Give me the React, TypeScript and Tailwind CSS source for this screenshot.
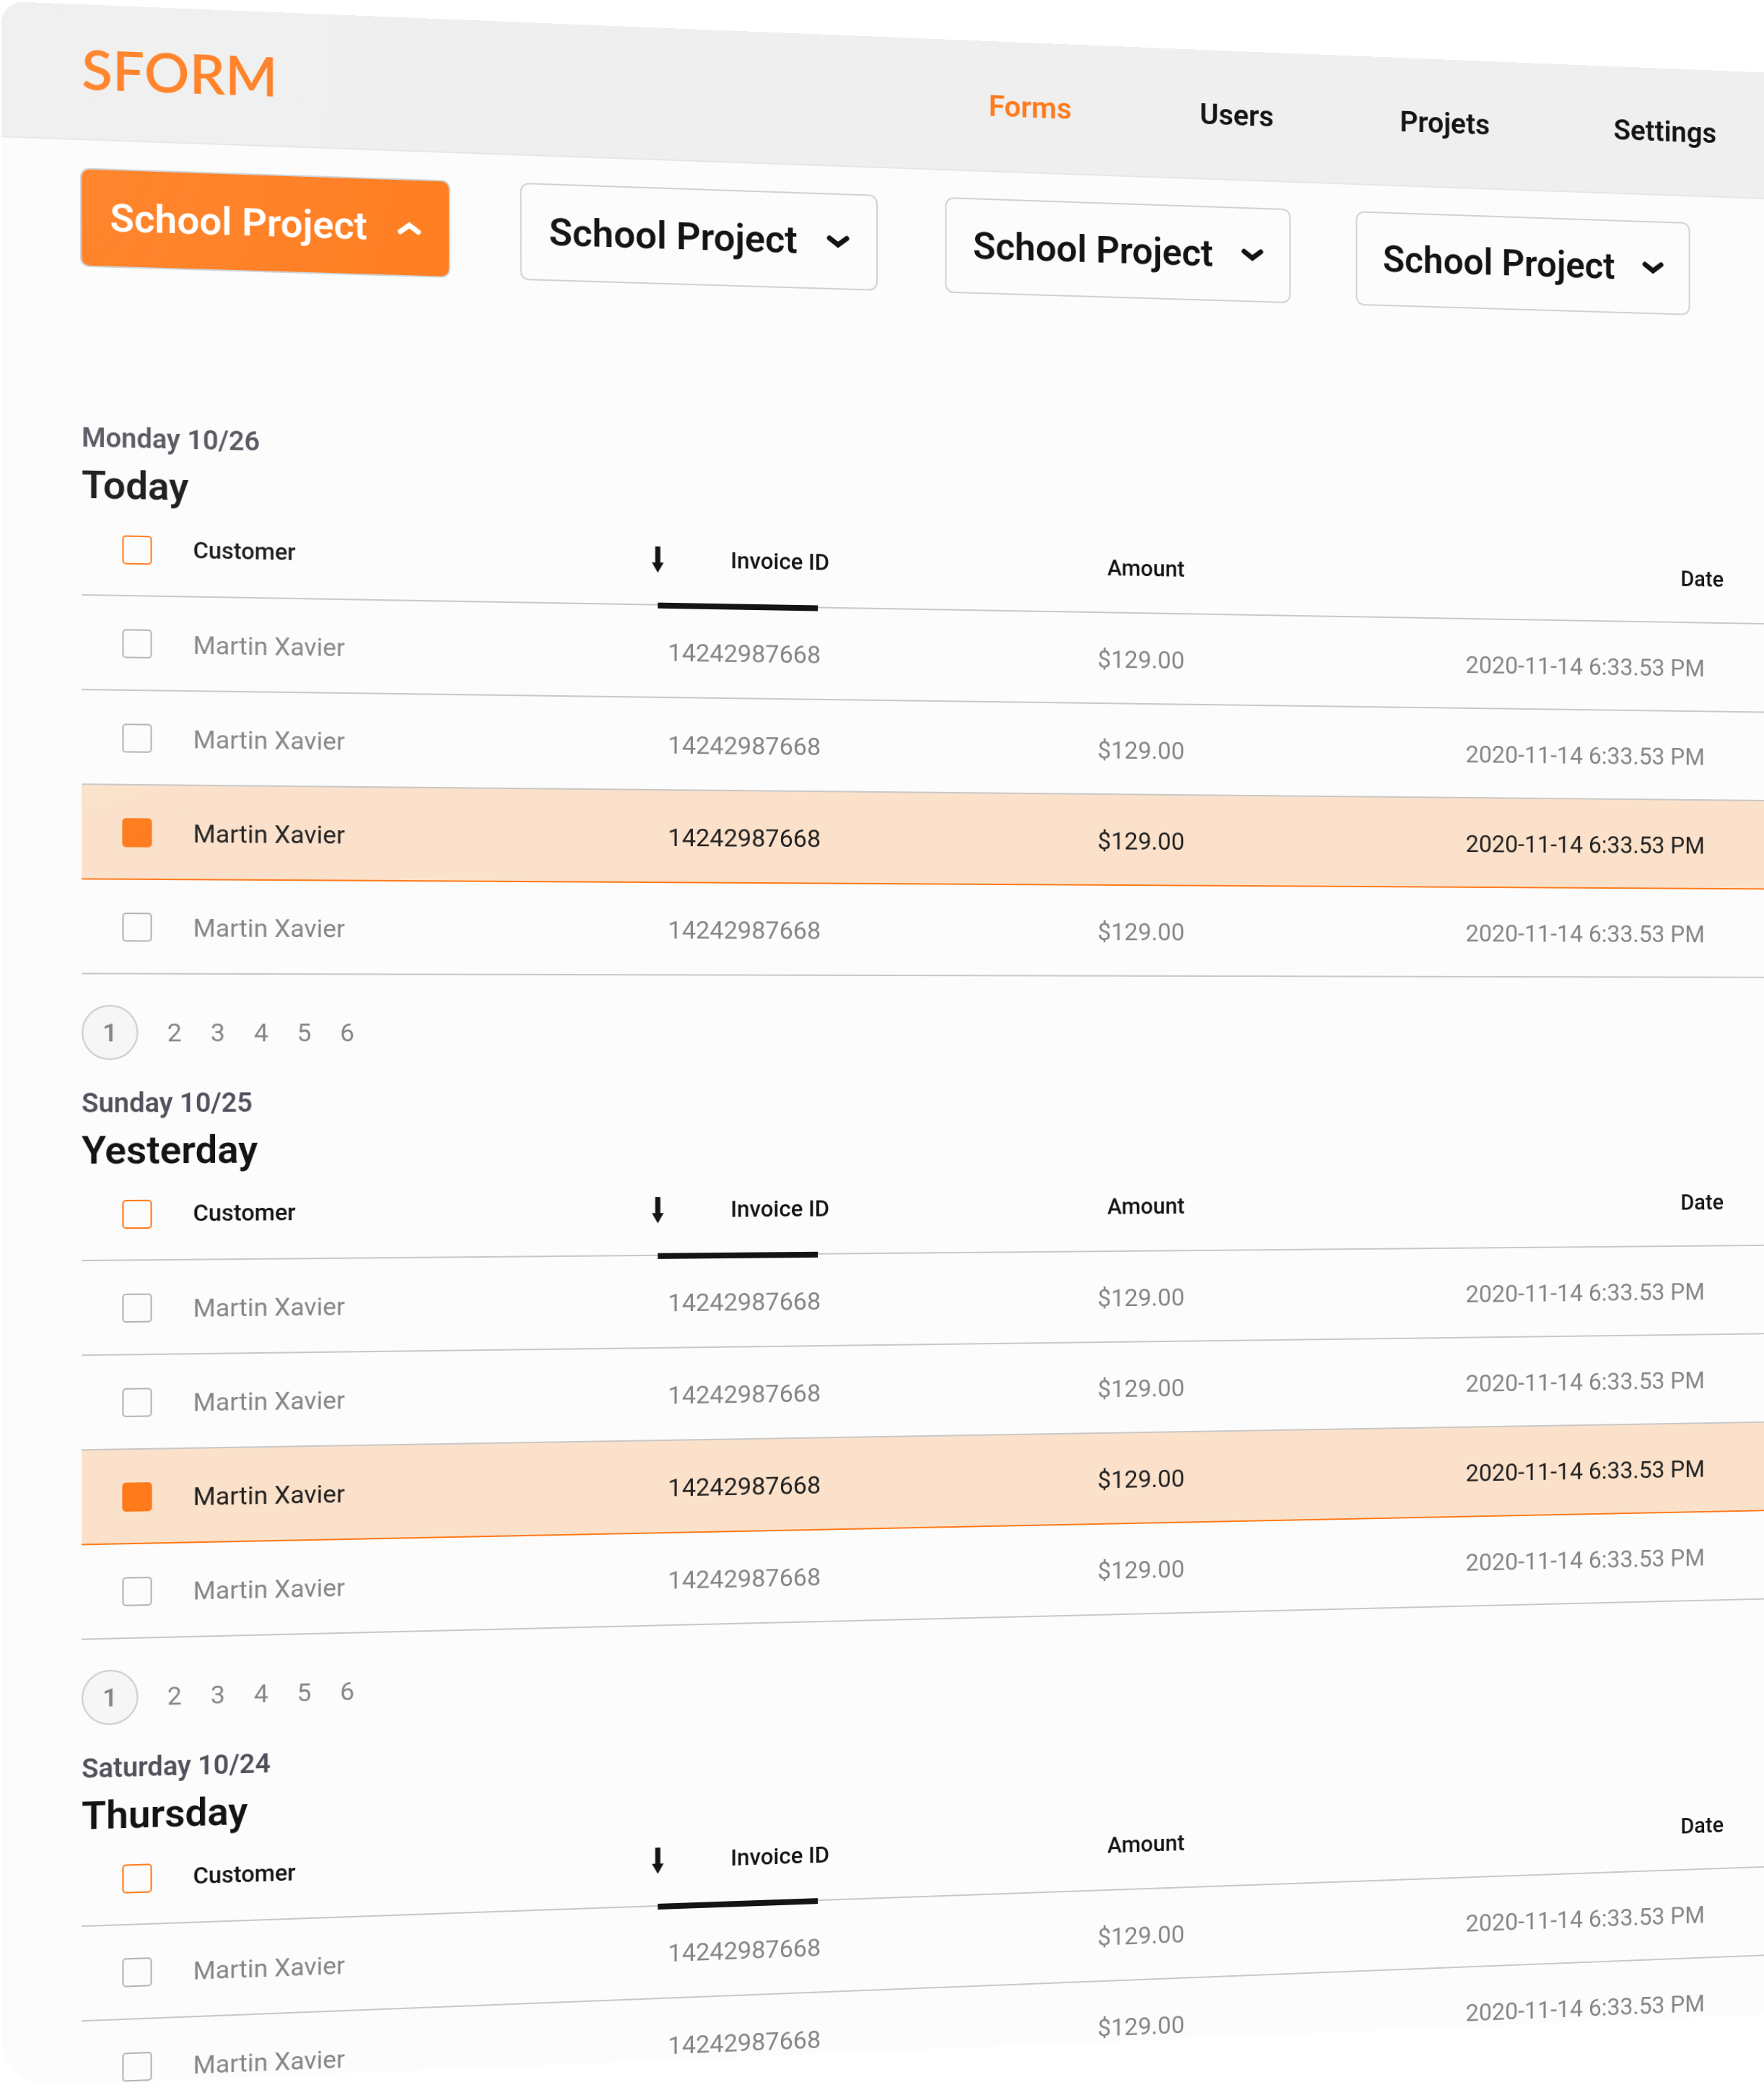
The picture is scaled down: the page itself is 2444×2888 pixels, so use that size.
import React from "react";

const NAV = ["Forms", "Users", "Projets", "Settings"];

const FILTERS = [
  { id: "filter-1", label: "School Project", open: true },
  { id: "filter-2", label: "School Project", open: false },
  { id: "filter-3", label: "School Project", open: false },
  { id: "filter-4", label: "School Project", open: false },
];

const DAYS = [
  { date: "Monday 10/26", title: "Today", rows: 4 },
  { date: "Sunday 10/25", title: "Yesterday", rows: 4 },
  { date: "Saturday 10/24", title: "Thursday", rows: 2 },
];

const ROWS = [
  { customer: "Martin Xavier", invoice: "14242987668", amount: "$129.00", date: "2020-11-14 6:33.53 PM", selected: false },
  { customer: "Martin Xavier", invoice: "14242987668", amount: "$129.00", date: "2020-11-14 6:33.53 PM", selected: false },
  { customer: "Martin Xavier", invoice: "14242987668", amount: "$129.00", date: "2020-11-14 6:33.53 PM", selected: true },
  { customer: "Martin Xavier", invoice: "14242987668", amount: "$129.00", date: "2020-11-14 6:33.53 PM", selected: false },
];

const PAGES = [2, 3, 4, 5, 6];

function Chevron({ open }: { open: boolean }) {
  return (
    <svg viewBox="0 0 32 18" className="h-[18px] w-8" fill="none" aria-hidden="true">
      <path
        d={open ? "M4 14 L16 5 L28 14" : "M4 4 L16 13 L28 4"}
        stroke="currentColor"
        strokeWidth="7"
        strokeLinecap="round"
        strokeLinejoin="miter"
      />
    </svg>
  );
}

function SortArrow() {
  return (
    <svg viewBox="0 0 16 36" className="h-9 w-4" fill="currentColor" aria-hidden="true">
      <path d="M4.500 0 H11.500 V22 H16 L8 36 L0 22 H4.500 Z" />
    </svg>
  );
}

function TopBar() {
  return (
    <header className="flex h-[182px] items-center border-b-2 border-[#e6e6e6] bg-[#efefef] pl-[104px]">
      <a href="#home" className="w-[1227px] pb-2 font-['Lato'] text-[74px] leading-none font-semibold text-[#ff7a1a]">
        SFORM
      </a>
      <nav aria-label="Main" className="flex gap-[182px] text-[41px] leading-[48px] font-semibold">
        {NAV.map((item, i) => (
          <a key={item} href={`#${item.toLowerCase()}`} className={i === 0 ? "text-[#ff7a1a]" : "text-[#141414]"}>
            {item}
          </a>
        ))}
      </nav>
    </header>
  );
}

function Filters() {
  return (
    <div className="-ml-0.5 flex gap-[94px]">
      {FILTERS.map((f) => (
        <button
          key={f.id}
          type="button"
          aria-expanded={f.open}
          className={`flex h-[133px] w-[490px] shrink-0 items-center justify-between rounded-xl border-2 border-[#ccd2d8] px-[37px] text-[52px] leading-[60px] font-semibold ${
            f.open ? "bg-[#ff7a1a] text-white" : "bg-[#fcfcfc] text-[#141414]"
          }`}
        >
          {f.label}
          <Chevron open={f.open} />
        </button>
      ))}
    </div>
  );
}

const BOX = "block size-[39px] appearance-none rounded-[5px] border-2 checked:border-[#ff7a1a] checked:bg-[#ff7a1a]";

function DaySection({ date, title, rows }: { date: string; title: string; rows: number }) {
  return (
    <section>
      <p className="text-[36px] leading-[48px] font-semibold text-[#51525c]">{date}</p>
      <h2 className="text-[52px] leading-[80px] font-semibold text-[#141414]">{title}</h2>

      <table className="w-full table-fixed border-separate border-spacing-0 text-[34px] leading-10">
        <colgroup>
          <col className="w-[146px]" />
          <col className="w-[615px]" />
          <col className="w-[244px]" />
          <col className="w-[499px]" />
          <col className="w-[786px]" />
          <col />
        </colgroup>
        <thead>
          <tr className="text-[31px] text-[#141414] [&>*]:h-[108px] [&>*]:border-b-2 [&>*]:border-[#c8c8c8] [&>*]:p-0 [&>*]:pb-4 [&>*]:font-medium">
            <td>
              <input type="checkbox" aria-label={`Select all, ${title}`} className={`${BOX} ml-[53px] border-[#ff7a1a]`} />
            </td>
            <th scope="col" className="text-left">Customer</th>
            <th scope="col" aria-sort="descending" className="relative">
              <span className="flex items-center justify-between">
                <SortArrow />
                Invoice ID
              </span>
              <span className="absolute right-4 -bottom-1.5 left-2 h-2 bg-[#141414]" />
            </th>
            <th scope="col" className="text-right">Amount</th>
            <th scope="col" className="text-right">Date</th>
            <td />
          </tr>
        </thead>
        <tbody>
          {ROWS.slice(0, rows).map((r, i) => (
            <tr
              key={i}
              className={`[&>td]:h-[127px] [&>td]:border-b-2 [&>td]:p-0 [&>td]:pt-0.5 ${
                r.selected
                  ? "bg-[#fbe1ca] text-[#222222] [&>td]:border-[#ff7a1a]"
                  : "text-[#868686] [&>td]:border-[#c8c8c8]"
              }`}
            >
              <td>
                <input
                  type="checkbox"
                  defaultChecked={r.selected}
                  aria-label={`Select row ${i + 1}, ${title}`}
                  className={`${BOX} ml-[53px] border-[#b4b4b4]`}
                />
              </td>
              <td>{r.customer}</td>
              <td className="text-right">
                <span className="mr-3">{r.invoice}</span>
              </td>
              <td className="text-right">{r.amount}</td>
              <td className="text-right">
                <span className="mr-7">{r.date}</span>
              </td>
              <td />
            </tr>
          ))}
        </tbody>
      </table>

      {rows === ROWS.length && (
        <nav aria-label={`Pages, ${title}`} className="mt-[41px] flex items-center gap-[38px] text-[34px] leading-10 text-[#868686]">
          <button
            type="button"
            aria-current="page"
            className="flex size-[74px] items-center justify-center rounded-full border-2 border-[#cccccc] bg-[#f6f6f6] font-semibold"
          >
            1
          </button>
          {PAGES.map((p) => (
            <button key={p} type="button">
              {p}
            </button>
          ))}
        </nav>
      )}
    </section>
  );
}

export default function App() {
  return (
    <div className="h-screen overflow-hidden bg-white pt-[51px] pb-[47px] pl-10 font-['Roboto',sans-serif] [perspective-origin:50%_1428px] [perspective:2978px]">
      <div className="relative h-full w-[calc(100%+400px)] origin-[calc(50vw-40px)_50%] [transform:rotateY(5deg)] overflow-hidden rounded-tl-[28px] rounded-bl-[64px] bg-[#fcfcfc]">
        <TopBar />
        <main className="px-[104px] pt-[37px]">
          <Filters />
          <div className="mt-[205px] flex flex-col gap-[34px]">
            {DAYS.map((d) => (
              <DaySection key={d.title} date={d.date} title={d.title} rows={d.rows} />
            ))}
          </div>
        </main>
        <div className="pointer-events-none absolute inset-0 bg-[radial-gradient(ellipse_900px_1500px_at_0_0,rgba(255,255,255,0.11),rgba(255,255,255,0))]" />
      </div>
    </div>
  );
}
